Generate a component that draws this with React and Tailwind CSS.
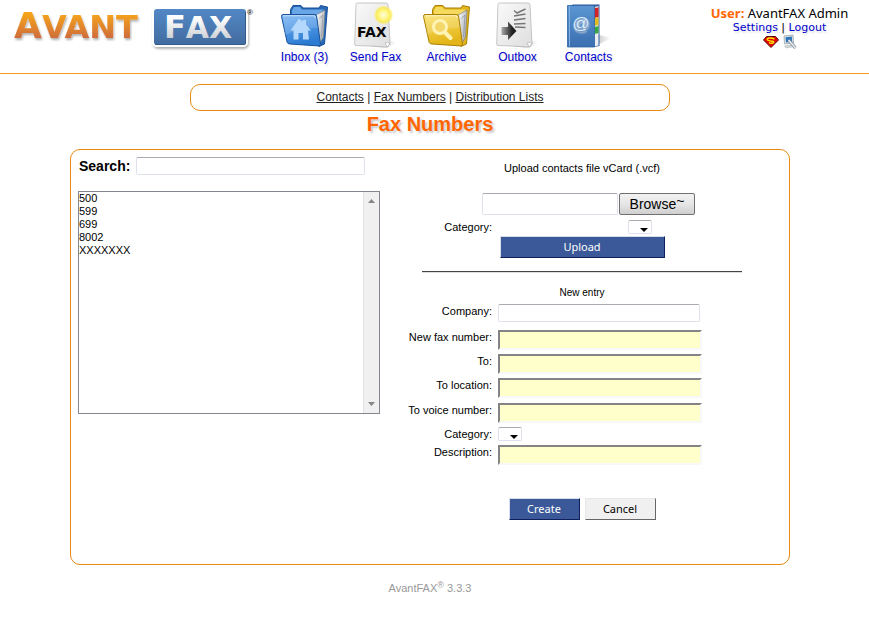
import React from "react";

function Logo() {
  return (
    <svg width="256" height="58" viewBox="0 0 256 58" role="img" aria-label="AvantFAX">
      <defs>
        <linearGradient id="logoOrange" x1="0" y1="14" x2="0" y2="38" gradientUnits="userSpaceOnUse">
          <stop offset="0" stopColor="#f5a41c" />
          <stop offset="1" stopColor="#cf6c3c" />
        </linearGradient>
        <linearGradient id="logoBlue" x1="0" y1="0" x2="0" y2="1">
          <stop offset="0" stopColor="#5288c6" />
          <stop offset="1" stopColor="#426b9f" />
        </linearGradient>
        <linearGradient id="logoSilver" x1="0" y1="18" x2="0" y2="38" gradientUnits="userSpaceOnUse">
          <stop offset="0" stopColor="#ffffff" />
          <stop offset="1" stopColor="#cfd2d6" />
        </linearGradient>
        <filter id="logoShadow" x="-5%" y="-10%" width="115%" height="140%">
          <feDropShadow dx="1" dy="2" stdDeviation="1.2" floodColor="#000" floodOpacity="0.3" />
        </filter>
      </defs>
      <g filter="url(#logoShadow)">
        <text x="14" y="38" fontFamily="DejaVu Sans" fontSize="36" fill="url(#logoOrange)" fontWeight="bold">
          A<tspan fontSize="32">VANT</tspan>
        </text>
        <rect x="152" y="7" width="96" height="40" rx="5" fill="#fff" />
      </g>
      <rect x="154" y="9" width="92" height="36" rx="3" fill="url(#logoBlue)" />
      <path d="M155 44.5h89.500q1 0 1-1V12" fill="none" stroke="#33588c" />
      <text x="164" y="38" fontFamily="DejaVu Sans" fontWeight="bold" fontSize="32" fill="url(#logoSilver)">
        F<tspan fontSize="30">AX</tspan>
      </text>
      <text x="247" y="15" fontFamily="Liberation Sans" fontWeight="bold" fontSize="8" fill="#333">®</text>
    </svg>
  );
}

function FolderIcon({ id, light, mid, dark, edge, children }) {
  return (
    <svg width="48" height="48" viewBox="0 0 48 48" aria-hidden="true">
      <defs>
        <linearGradient id={id} x1="0" y1="0" x2="0.3" y2="1">
          <stop offset="0" stopColor={light} />
          <stop offset="1" stopColor={mid} />
        </linearGradient>
        <linearGradient id={id + "Paper"} x1="0" y1="0" x2="1" y2="0.6">
          <stop offset="0" stopColor="#fff" />
          <stop offset="1" stopColor="#a9adb2" />
        </linearGradient>
      </defs>
      <path d="M9.500 14V8.500L12 4.500h8l2 2.500H38L39.500 4.500 46.500 6 43.500 43 38 45.500z" fill={dark} stroke={edge} strokeLinejoin="round" />
      <path d="M11 9.500 13 6h6l2 2.500H43L38 13.500H11z" fill={light} opacity="0.8" />
      <path d="M35 14 44 9 42.500 36 38.500 43z" fill={`url(#${id}Paper)`} stroke="#777c82" strokeWidth="0.600" />
      <path d="M38.500 17.500 42 14 40.500 36" fill="none" stroke="#8b9096" strokeWidth="0.700" />
      <path d="M.5 15.500Q.5 13.500 2 13.500H33.500Q35.500 13.500 35.700 16L39.500 43 38.500 45 9 43Q6.500 42.800 6.200 41.500z" fill={`url(#${id})`} stroke={edge} strokeLinejoin="round" />
      <path d="M2 14.800H33.500L34.500 17" fill="none" stroke="#fff" opacity="0.7" />
      <path d="M2 15.500 35 15.500 37 27Q20 26 4 34z" fill="#fff" opacity="0.15" />
      {children}
    </svg>
  );
}

function InboxIcon() {
  return (
    <FolderIcon id="inboxFolder" light="#78b5f5" mid="#2b7bd3" dark="#2868b4" edge="#17509a">
      <path d="M9.500 29.500 18 17.500 21.500 20.500V19H25V23.500L30 29.500H27L28 38.500H22V32H17.500V38.500H12.500V29.500z" fill="#b3d8fb" />
    </FolderIcon>
  );
}

function ArchiveIcon() {
  return (
    <FolderIcon id="archiveFolder" light="#fbe36d" mid="#e3b416" dark="#dfb51e" edge="#a97f05">
      <circle cx="17" cy="26" r="6.500" fill="#f3d76a" stroke="#fff3b4" strokeWidth="3" />
      <path d="M22 31.500 27.500 37" stroke="#fff3b4" strokeWidth="4" strokeLinecap="round" />
    </FolderIcon>
  );
}

function Page({ id }) {
  return (
    <>
      <defs>
        <linearGradient id={id} x1="0" y1="0" x2="1" y2="1">
          <stop offset="0" stopColor="#fafafa" />
          <stop offset="1" stopColor="#dededf" />
        </linearGradient>
        <linearGradient id={id + "Shade"} x1="0" y1="0" x2="1" y2="0">
          <stop offset="0" stopColor="#555" stopOpacity="0.5" />
          <stop offset="1" stopColor="#888" stopOpacity="0" />
        </linearGradient>
      </defs>
      <path d="M20 45.500 36 39 45 41.500 35 47z" fill={`url(#${id}Shade)`} />
      <path d="M4 3.500Q4 2 5.500 2H34Q36 2 36 4L38 42.500 35.500 46Q18 45 4 44.500 2.500 44.500 2.700 43z" fill={`url(#${id})`} stroke="#b9b9ba" strokeWidth="0.800" />
      <path d="M38 42.500Q34.500 40.500 33 42L35.500 46z" fill="#fff" stroke="#999" strokeWidth="0.500" />
    </>
  );
}

function SendFaxIcon() {
  return (
    <svg width="48" height="48" viewBox="0 0 48 48" aria-hidden="true">
      <defs>
        <radialGradient id="sun">
          <stop offset="0" stopColor="#fffce0" />
          <stop offset="0.5" stopColor="#fff57a" />
          <stop offset="0.75" stopColor="#fbe94c" stopOpacity="0.85" />
          <stop offset="1" stopColor="#fff27a" stopOpacity="0" />
        </radialGradient>
      </defs>
      <Page id="sendPage" />
      <circle cx="31.500" cy="14" r="10" fill="url(#sun)" />
      <text x="5" y="36" fontFamily="DejaVu Sans" fontWeight="bold" fontSize="14" fill="#080808">FAX</text>
    </svg>
  );
}

function OutboxIcon() {
  return (
    <svg width="48" height="48" viewBox="0 0 48 48" aria-hidden="true">
      <defs>
        <linearGradient id="outArrow" x1="0" y1="0" x2="1" y2="0">
          <stop offset="0" stopColor="#aaa" />
          <stop offset="0.7" stopColor="#222" />
        </linearGradient>
      </defs>
      <Page id="outPage" />
      <path d="M20 9.500 23 12 31.500 8M20 15 31.500 13M20 19 31.500 17.500M20 23 31.500 22.500M21 26 31.500 26.500" fill="none" stroke="#777" strokeWidth="1.500" />
      <path d="M7.500 26H14V20.500L22.500 30 14 39V34H7.500z" fill="url(#outArrow)" />
    </svg>
  );
}

function ContactsIcon() {
  return (
    <svg width="48" height="48" viewBox="0 0 48 48" aria-hidden="true">
      <defs>
        <linearGradient id="book" x1="0" y1="0" x2="0" y2="1">
          <stop offset="0" stopColor="#5b95d2" />
          <stop offset="1" stopColor="#3a6fb0" />
        </linearGradient>
        <linearGradient id="bookShade" x1="0" y1="0" x2="1" y2="0">
          <stop offset="0" stopColor="#666" stopOpacity="0.5" />
          <stop offset="1" stopColor="#999" stopOpacity="0" />
        </linearGradient>
      </defs>
      <path d="M28 46 34 34 47 37z" fill="url(#bookShade)" />
      <path d="M3 5.500 8 3.500H34.500V45L29 46z" fill="#2d5f9f" />
      <path d="M29 6 33.500 5V44.500L29 45.500z" fill="#e9edf0" />
      <path d="M29.500 7 33.500 6.500V16L29.500 17z" fill="#d6222a" />
      <path d="M29.500 17 33.500 16V24L29.500 25z" fill="#e2bb1f" />
      <path d="M29.500 26 33.500 25V32L29.500 33z" fill="#38a845" />
      <path d="M2.500 4.500H28.500L29.500 6V46H2.500z" fill="url(#book)" stroke="#2f62a2" strokeWidth="0.800" />
      <path d="M4.500 5V45.500" stroke="#7fb0e0" />
      <text x="16" y="28" textAnchor="middle" fontFamily="Liberation Sans" fontSize="17" fill="#dcecfb">@</text>
    </svg>
  );
}

const NAV = [
  ["Inbox (3)", InboxIcon],
  ["Send Fax", SendFaxIcon],
  ["Archive", ArchiveIcon],
  ["Outbox", OutboxIcon],
  ["Contacts", ContactsIcon],
];

function Header() {
  return (
    <header className="flex h-[74px] items-start border-b border-[#f39a1b]">
      <div className="w-[269px] shrink-0">
        <Logo />
      </div>
      <nav className="flex">
        {NAV.map(([label, Icon]) => (
          <a key={label} href="#" className="flex w-[71px] flex-col items-center pt-px text-[12px] leading-4 text-[#0000cc] [text-shadow:1px_2px_2px_#ddd]">
            <Icon />
            {label}
          </a>
        ))}
      </nav>
      <div className="ml-auto flex w-[179px] flex-col items-center pt-1.5 font-['DejaVu_Sans',sans-serif] text-[12px] leading-4">
        <div className="font-['Noto_Sans',sans-serif] text-[13px] leading-[15px] whitespace-nowrap">
          <b className="text-[#ff6600]">User:</b> AvantFAX Admin
        </div>
        <div className="text-[11px] leading-[13px] [text-shadow:1px_2px_2px_#ddd]">
          <a href="#" className="text-[#0000cc]">Settings</a> | <a href="#" className="text-[#0000cc]">Logout</a>
        </div>
        <div className="flex items-center gap-1">
          <a href="#" aria-label="Administration">
            <svg width="16" height="14" viewBox="0 0 16 14">
              <path d="M3.500 1.500H12.500L15.500 5 8 12.500.5 5z" fill="#e00000" stroke="#5c0909" strokeWidth="1" />
              <path d="M11.500 4.200Q9.500 2.800 6 3 3.500 3.500 4.500 5 6 6 9.500 6.300 11.500 7 10 8 8 8.700 6 7.700" fill="none" stroke="#ffe500" strokeWidth="1.500" />
            </svg>
          </a>
          <a href="#" aria-label="System settings">
            <svg width="14" height="16" viewBox="0 0 14 16">
              <path d="M1 2 10 1 10.500 9 1.500 10z" fill="#dfe4e8" stroke="#9aa4ad" strokeWidth="0.800" />
              <path d="M2.500 3.300 8.800 2.600 9.200 7.800 3 8.500z" fill="#2f76b8" />
              <path d="M1.500 12 10 10.500 12 12.500 3 14z" fill="#d5d9dc" stroke="#a6adb3" strokeWidth="0.500" />
              <path d="M6 6.500 12.500 14" stroke="#7c868f" strokeWidth="3" />
              <path d="M5.500 6 12.500 14" stroke="#e4e9ee" strokeWidth="1.800" />
            </svg>
          </a>
        </div>
      </div>
    </header>
  );
}

const FIELD = "rounded-xs border border-[#dfe2ea] border-t-[#a8abb2] bg-white px-1 outline-none";
const YELLOW = "h-5 w-[204px] border-2 border-[#f8f8f8] border-t-[#848484] border-l-[#848484] bg-[#ffffcc] px-1 outline-none";
const BLUE_BUTTON = "h-[22px] border border-[#d9dfea] border-r-[#0e1f5b] border-b-[#0e1f5b] bg-[#3b5998] font-['Noto_Sans',sans-serif] text-[11px] leading-5 text-white";

function TinySelect({ id }) {
  return (
    <span className="relative block h-[14px] w-6">
      <select id={id} className="block h-[14px] w-6 appearance-none rounded-xs border border-[#dfe2ea] border-t-[#a8abb2] bg-white outline-none" />
      <svg width="8" height="4" viewBox="0 0 8 4" className="pointer-events-none absolute top-2 left-3">
        <path d="M0 0H8L4 4z" fill="#000" />
      </svg>
    </span>
  );
}

function Row({ id, label, className, children }) {
  return (
    <div className={"flex gap-1.5 " + className}>
      <label htmlFor={id} className="w-[88px] shrink-0 text-right leading-[14px] whitespace-nowrap">{label}</label>
      {children}
    </div>
  );
}

function UploadForm() {
  return (
    <form className="flex flex-col" onSubmit={(e) => e.preventDefault()}>
      <label htmlFor="vcard" className="pt-1 text-center leading-[14px]">Upload contacts file vCard (.vcf)</label>
      <div className="mt-[18px] ml-[78px] flex gap-px">
        <input id="vcard" type="text" className={"h-[22px] w-[136px] " + FIELD} />
        <button type="button" className="h-[22px] w-[76px] rounded-xs border border-[#707070] bg-linear-to-b from-[#f2f2f2] via-[#e6e6e6] to-[#cfcfcf] text-[14px] leading-5">
          Browse<span className="align-[3px] leading-none">~</span>
        </button>
      </div>
      <Row id="uploadCategory" label="Category:" className="mt-[5px]">
        <div className="ml-[130px]"><TinySelect id="uploadCategory" /></div>
      </Row>
      <button type="submit" className={"mt-0.5 w-[165px] self-center " + BLUE_BUTTON}>Upload</button>
      <hr className="mt-[13px] h-0.5 w-80 self-center border-t border-b border-t-[#444] border-b-[#ddd]" />
    </form>
  );
}

function EntryForm() {
  return (
    <form className="flex flex-col" onSubmit={(e) => e.preventDefault()}>
      <h2 className="mt-3 text-center text-[10px] leading-[15px]">New entry</h2>
      <Row id="company" label="Company:" className="mt-1">
        <input id="company" type="text" className={"h-[18px] w-[202px] " + FIELD} />
      </Row>
      <Row id="fax" label="New fax number:" className="mt-2">
        <input id="fax" type="text" className={YELLOW} />
      </Row>
      <Row id="to" label="To:" className="mt-1">
        <input id="to" type="text" className={YELLOW} />
      </Row>
      <Row id="location" label="To location:" className="mt-1">
        <input id="location" type="text" className={YELLOW} />
      </Row>
      <Row id="voice" label="To voice number:" className="mt-[5px]">
        <input id="voice" type="text" className={YELLOW} />
      </Row>
      <Row id="category" label="Category:" className="mt-1">
        <TinySelect id="category" />
      </Row>
      <Row id="description" label="Description:" className="mt-1">
        <input id="description" type="text" className={YELLOW} />
      </Row>
      <div className="mt-[33px] flex justify-center gap-[5px]">
        <button type="submit" className={"w-[71px] " + BLUE_BUTTON}>Create</button>
        <button type="button" className="h-[22px] w-[71px] border border-[#e7e7e7] border-r-[#666] border-b-[#666] bg-[#f0f0f0] font-['Noto_Sans',sans-serif] text-[11px] leading-5">Cancel</button>
      </div>
    </form>
  );
}

function NumberList() {
  return (
    <div className="w-[302px] shrink-0">
      <div className="flex h-[18px] items-center gap-1.5 pl-px">
        <label htmlFor="search" className="text-[14px] font-bold">Search:</label>
        <input id="search" type="text" className={"h-[18px] w-[229px] text-[12px] " + FIELD} />
      </div>
      <div className="mt-4 flex h-[223px] border border-[#828790]">
        <select size="16" aria-label="Fax numbers" className="min-w-0 flex-1 appearance-none overflow-hidden bg-white text-[11px] outline-none">
          <option className="h-[13px] min-h-0 p-0 leading-[13px]">500</option>
          <option className="h-[13px] min-h-0 p-0 leading-[13px]">599</option>
          <option className="h-[13px] min-h-0 p-0 leading-[13px]">699</option>
          <option className="h-[13px] min-h-0 p-0 leading-[13px]">8002</option>
          <option className="h-[13px] min-h-0 p-0 leading-[13px]">XXXXXXX</option>
        </select>
        <div aria-hidden="true" className="flex w-4 flex-col items-center justify-between border-l border-[#e3e3e3] bg-[#f0f0f0] py-[7px]">
          <svg width="7" height="4" viewBox="0 0 7 4"><path d="M3.500 0 7 4H0z" fill="#868686" /></svg>
          <svg width="7" height="4" viewBox="0 0 7 4"><path d="M3.500 4 7 0H0z" fill="#868686" /></svg>
        </div>
      </div>
    </div>
  );
}

export default function App() {
  return (
    <div className="bg-white font-['Liberation_Sans',Arial,sans-serif] text-[11px] text-black">
      <Header />
      <main className="flex flex-col items-center pt-2.5 pr-[9px]">
        <nav className="w-full max-w-[480px] rounded-[10px] border border-[#e68a12] py-[5px] text-center text-[12px] leading-[15px] text-[#222]">
          <a href="#" className="underline">Contacts</a> | <a href="#" className="underline">Fax Numbers</a> | <a href="#" className="underline">Distribution Lists</a>
        </nav>
        <h1 className="text-[20px] leading-[26px] font-bold text-[#ff6600] [text-shadow:2px_2px_2px_#ccc]">Fax Numbers</h1>
        <section className="mt-3 flex w-full max-w-[720px] gap-6 rounded-[10px] border border-[#e68a12] pt-[7px] pr-[29px] pb-11 pl-[7px]">
          <NumberList />
          <div className="min-w-0 flex-1">
            <UploadForm />
            <EntryForm />
          </div>
        </section>
        <footer className="mt-[15px] text-[11px] leading-4 text-[#999]">
          AvantFAX<sup className="text-[9px]">®</sup> 3.3.3
        </footer>
      </main>
    </div>
  );
}
